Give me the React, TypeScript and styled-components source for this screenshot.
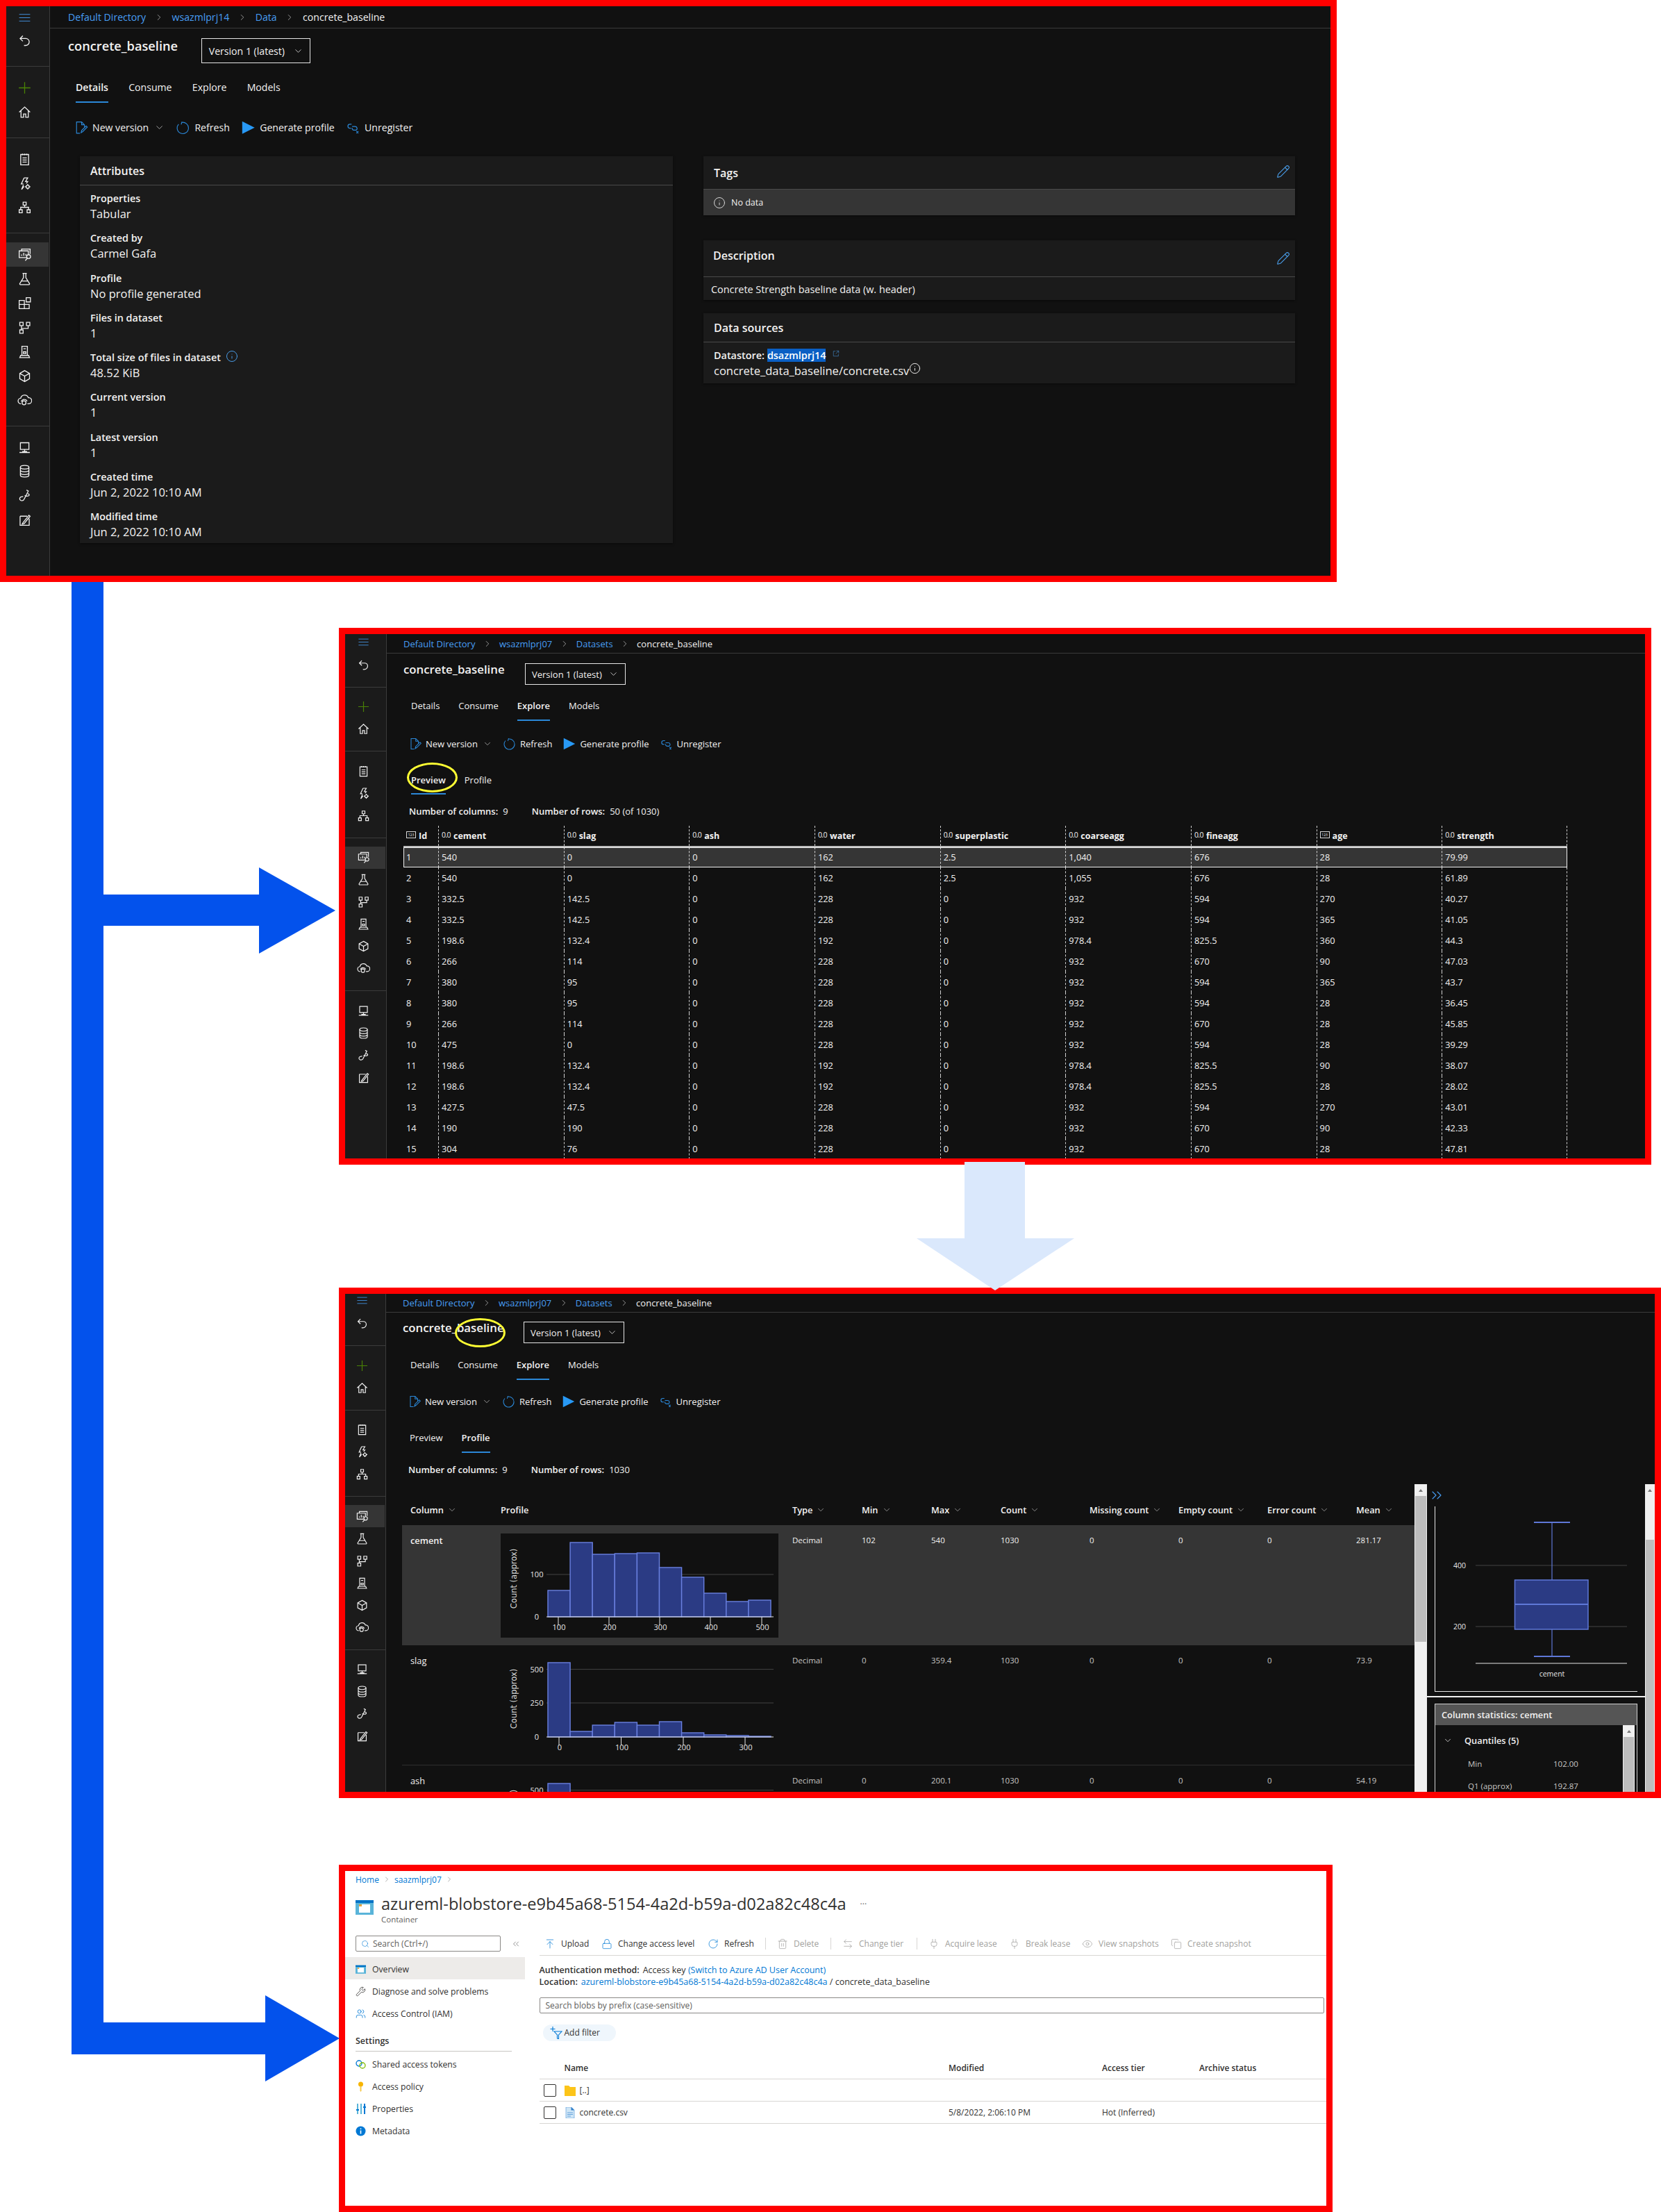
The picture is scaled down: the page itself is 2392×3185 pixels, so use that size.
import React from 'react'
import styled, { createGlobalStyle } from 'styled-components'
import {
  ArrowLeftRight,
  ArrowUpToLine,
  ChevronDown,
  ChevronRight,
  ChevronsLeft,
  ChevronsRight,
  Copy,
  Eye,
  Info,
  Lock,
  Pencil,
  Plug,
  RotateCw,
  Search,
  Trash2,
  Users,
  Wrench,
} from 'lucide-react'

const GlobalStyle = createGlobalStyle`
  html, body {
    margin: 0;
    background: #fff;
    font-family: "Open Sans", "Noto Sans", sans-serif;
  }
  * { box-sizing: border-box; }
`

type Metrics = {
  u: number
  rail: number
  railPad: number
  icon: number
  item: number
  ham: number
  backGap: number
  pt: number
  pb: number
  crumb: number
  crumbPad: number
  titleW: number
  titleLh: number
  titleH: number
  ddTop: number
  ddH: number
  tabsH: number
  tabsLeft: number
  toolsH: number
  toolsLeft: number
}

const large: Metrics = {
  u: 1.085, rail: 62, railPad: 16, icon: 21, item: 34.9, ham: 32, backGap: 0, pt: 13, pb: 19,
  crumb: 32, crumbPad: 26, titleW: 192, titleLh: 50, titleH: 64, ddTop: 14, ddH: 36,
  tabsH: 43, tabsLeft: 37, toolsH: 77, toolsLeft: 35,
}
const medium: Metrics = {
  u: 1, rail: 59, railPad: 17, icon: 19, item: 32, ham: 22, backGap: 6, pt: 12, pb: 15.5,
  crumb: 28, crumbPad: 24, titleW: 175, titleLh: 46, titleH: 55, ddTop: 14, ddH: 31,
  tabsH: 42, tabsLeft: 35, toolsH: 65, toolsLeft: 32,
}
const compact: Metrics = {
  ...medium, rail: 58, railPad: 15, ham: 19, backGap: 7.5,
  crumb: 27, titleW: 174, titleLh: 44, titleH: 54, ddTop: 13, tabsH: 43, toolsH: 62,
}

const Page = styled.div`
  position: relative;
  width: 2392px;
  height: 3185px;
  overflow: hidden;
`

const Frame = styled.section<{ $w: number; $h: number; $top: number; $left: number; $light?: boolean }>`
  width: ${(p) => p.$w}px;
  height: ${(p) => p.$h}px;
  margin: ${(p) => p.$top}px 0 0 ${(p) => p.$left}px;
  border: 9px solid #ff0000;
  overflow: hidden;
  background: ${(p) => (p.$light ? '#fff' : '#111')};
  color: ${(p) => (p.$light ? '#323130' : '#f3f2f1')};
`

const Shell = styled.div<{ $m: Metrics }>`
  --u: ${(p) => p.$m.u};
  display: flex;
  height: 100%;
`

const Rail = styled.nav<{ $m: Metrics }>`
  flex: 0 0 ${(p) => p.$m.rail + 1}px;
  background: #1b1b1b;
  border-right: 1px solid #3b3b3b;
  color: #f0f0f0;
`

const RailGroup = styled.div<{ $m: Metrics; $first?: boolean }>`
  padding: ${(p) => (p.$first ? 0 : p.$m.pt)}px 0 ${(p) => p.$m.pb}px;
  border-bottom: 1px solid #3b3b3b;
  &:last-child { border-bottom: 0; }
`

const RailItem = styled.div<{ $m: Metrics; $active?: boolean; $color?: string; $h?: number; $gap?: number }>`
  display: flex;
  align-items: center;
  height: ${(p) => p.$h ?? p.$m.item}px;
  margin-top: ${(p) => p.$gap ?? 0}px;
  margin-right: 1px;
  padding-left: ${(p) => p.$m.railPad}px;
  background: ${(p) => (p.$active ? '#353535' : 'transparent')};
  color: ${(p) => p.$color ?? 'inherit'};
  svg {
    width: ${(p) => p.$m.icon}px;
    height: ${(p) => p.$m.icon}px;
    fill: none;
    stroke: currentColor;
    stroke-width: 1.5;
  }
`

const Main = styled.main`
  flex: 1;
  min-width: 0;
`

const CrumbBar = styled.div<{ $m: Metrics }>`
  display: flex;
  align-items: center;
  height: ${(p) => p.$m.crumb}px;
  padding-left: ${(p) => p.$m.crumbPad}px;
  border-bottom: 1px solid #3b3b3b;
  font-size: calc(var(--u) * 13px);
`

const CrumbLink = styled.span`
  color: #479ef5;
`

const CrumbSep = styled.span`
  display: flex;
  justify-content: center;
  width: calc(var(--u) * 34.5px);
  color: #c8c8c8;
`

const TitleRow = styled.div<{ $m: Metrics }>`
  display: flex;
  align-items: flex-start;
  height: ${(p) => p.$m.titleH}px;
  padding-left: ${(p) => p.$m.crumbPad}px;
`

const PageTitle = styled.h1<{ $m: Metrics }>`
  position: relative;
  width: ${(p) => p.$m.titleW}px;
  margin: 0;
  font-size: calc(var(--u) * 16.8px);
  font-weight: 600;
  line-height: ${(p) => p.$m.titleLh}px;
  white-space: nowrap;
`

const VersionSelect = styled.div<{ $m: Metrics }>`
  display: flex;
  align-items: center;
  justify-content: space-between;
  width: calc(var(--u) * 145px);
  height: ${(p) => p.$m.ddH}px;
  margin-top: ${(p) => p.$m.ddTop}px;
  padding: 0 calc(var(--u) * 9px);
  border: 1px solid #e6e6e6;
  font-size: calc(var(--u) * 13px);
`

const TabStrip = styled.div<{ $h: number; $left: number }>`
  display: flex;
  gap: calc(var(--u) * 27px);
  height: ${(p) => p.$h}px;
  padding-left: ${(p) => p.$left}px;
`

const Tab = styled.span<{ $active?: boolean }>`
  position: relative;
  display: flex;
  align-items: center;
  border-bottom: 2px solid ${(p) => (p.$active ? '#2b88d8' : 'transparent')};
  font-size: calc(var(--u) * 13px);
  font-weight: ${(p) => (p.$active ? 600 : 400)};
`

const ToolBar = styled.div<{ $h: number; $left: number }>`
  display: flex;
  align-items: center;
  gap: calc(var(--u) * 16px);
  height: ${(p) => p.$h}px;
  padding-left: ${(p) => p.$left}px;
  padding-bottom: ${(p) => (p.$h > 70 ? 5 : 0)}px;
`

const Tool = styled.span`
  display: flex;
  align-items: center;
  font-size: calc(var(--u) * 13px);
  white-space: nowrap;
  svg {
    flex: 0 0 auto;
    margin-right: calc(var(--u) * 6px);
    width: calc(var(--u) * 18px);
    height: calc(var(--u) * 18px);
    color: #2b88d8;
  }
`

const CaretDown = styled(ChevronDown)`
  && {
    width: calc(var(--u) * 14px);
    height: calc(var(--u) * 14px);
    margin: 0 0 0 calc(var(--u) * 7px);
    color: #bdbdbd;
    stroke-width: 1.3;
  }
`

const Ring = styled.span<{ $w: number; $h: number; $x: number; $y: number }>`
  position: absolute;
  left: ${(p) => p.$x}px;
  top: ${(p) => p.$y}px;
  width: ${(p) => p.$w}px;
  height: ${(p) => p.$h}px;
  border: 3px solid #ffff33;
  border-radius: 50%;
`

const CountLine = styled.div<{ $h: number; $top?: number }>`
  display: flex;
  align-items: center;
  gap: 34px;
  height: ${(p) => p.$h}px;
  padding: ${(p) => p.$top ?? 0}px 0 0 32px;
  font-size: 13px;
  b { font-weight: 600; margin-right: 7px; }
`

/* details page */
const DetailGrid = styled.div`
  display: grid;
  grid-template-columns: 854px 852px;
  column-gap: 44px;
  padding-left: 43px;
`

const Card = styled.div<{ $mt?: number }>`
  margin-top: ${(p) => p.$mt ?? 0}px;
  background: #1b1b1b;
  box-shadow: 0 1px 3px rgba(0, 0, 0, 0.5);
`

const CardHead = styled.div<{ $h: number; $pad?: number; $top?: number }>`
  display: flex;
  align-items: ${(p) => (p.$top ? 'flex-start' : 'center')};
  justify-content: space-between;
  height: ${(p) => p.$h}px;
  padding: ${(p) => p.$top ?? 0}px 7px 0 ${(p) => p.$pad ?? 15}px;
  font-size: 16px;
  font-weight: 600;
  line-height: 22px;
  border-bottom: 1px solid #4a4a4a;
  svg {
    width: 20px;
    height: 20px;
    margin-top: ${(p) => (p.$top ? 5 : -4)}px;
    color: #4a9eea;
    stroke-width: 1.3;
  }
`

const Field = styled.div`
  height: 57.25px;
  padding: 7.5px 15px 0;
`

const FieldLabel = styled.div`
  display: flex;
  align-items: center;
  gap: 7px;
  height: 22px;
  font-size: 14.4px;
  font-weight: 600;
  svg { width: 18px; height: 18px; margin-top: -4px; color: #4a9eea; stroke-width: 1.3; }
`

const FieldValue = styled.div`
  display: flex;
  align-items: center;
  height: 22px;
  font-size: 16.5px;
  svg { width: 17px; height: 17px; margin-top: -5px; stroke-width: 1.4; }
`

const NoData = styled.div`
  display: flex;
  align-items: center;
  gap: 8px;
  height: 37px;
  padding-left: 14px;
  background: #353535;
  font-size: 12.5px;
  svg { width: 18px; height: 18px; color: #d8d8d8; stroke-width: 1.3; }
`

const CardText = styled.div`
  display: flex;
  align-items: center;
  height: 33px;
  padding: 2px 0 0 11px;
  font-size: 14.4px;
`

const CardBody = styled.div`
  padding: 7px 15px 8px;
`

const Highlight = styled.span`
  background: #0a5fc4;
  color: #fff;
  margin-left: 4px;
`

const External = styled.span`
  display: flex;
  margin-left: 3px;
  svg { width: 10px; height: 10px; color: #4a9eea; margin: -5px 0 0; }
`

/* preview table */
const GridTable = styled.div`
  width: 1676px;
  margin: -3px 0 0 24px;
`

const GridRow = styled.div<{ $head?: boolean; $selected?: boolean }>`
  display: grid;
  grid-template-columns: 50px repeat(9, 180.67px);
  height: ${(p) => (p.$head ? 28.5 : 29.95)}px;
  align-items: stretch;
  font-size: ${(p) => (p.$head ? 12.5 : 12.8)}px;
  font-weight: ${(p) => (p.$head ? 700 : 400)};
  background: ${(p) => (p.$selected ? '#353535' : 'transparent')};
  outline: ${(p) => (p.$selected ? '1px solid #f0f0f0' : 'none')};
  outline-offset: -1px;
  margin-bottom: ${(p) => (p.$head ? 2 : 0)}px;
  box-shadow: ${(p) => (p.$head ? '0 2px 0 #bdbdbd' : 'none')};
`

const GridCell = styled.div`
  display: flex;
  align-items: center;
  gap: 4px;
  padding-left: 4px;
  border-left: 1px dashed #cfcfcf;
  &:first-child { border-left: 0; }
  &:last-child { border-right: 1px dashed #cfcfcf; }
`

const TypeMark = styled.span`
  font-size: 10.5px;
  font-weight: 400;
  letter-spacing: -0.6px;
  margin-top: -3px;
`

const NumberMark = styled.span`
  display: inline-flex;
  align-items: center;
  justify-content: center;
  width: 14px;
  height: 10px;
  margin-top: -3px;
  border: 1px solid #d8d8d8;
  font-size: 5px;
  font-weight: 400;
`

/* profile view */
const ProfileBody = styled.div`
  display: flex;
  height: 444px;
`

const ProfileTable = styled.div`
  flex: 0 0 1481px;
  padding: 15.5px 0 0 23px;
  overflow: hidden;
`

const ProfileRow = styled.div<{ $head?: boolean; $active?: boolean; $h?: number; $line?: boolean }>`
  display: grid;
  grid-template-columns: 142px 420px 100px 100px 100px 128px 128px 128px 128px 84px;
  height: ${(p) => p.$h ?? 173.3}px;
  align-items: ${(p) => (p.$head ? 'center' : 'start')};
  background: ${(p) => (p.$active ? '#353535' : 'transparent')};
  border-bottom: ${(p) => (p.$line ? '1px solid #2e2e2e' : '0')};
  font-size: 11.5px;
  color: ${(p) => (p.$active ? '#f3f2f1' : '#c8c6c4')};
`

const ProfileHeadCell = styled.span<{ $pad?: number }>`
  display: flex;
  align-items: center;
  gap: 5px;
  padding-left: ${(p) => p.$pad ?? 0}px;
  font-size: 12.8px;
  font-weight: 600;
  color: #f3f2f1;
  svg { width: 14px; height: 14px; stroke-width: 1.2; color: #bdbdbd; }
`

const NameCell = styled.span<{ $active?: boolean }>`
  padding: 13px 0 0 12px;
  font-size: 12.8px;
  font-weight: ${(p) => (p.$active ? 600 : 400)};
  color: #f3f2f1;
`

const ValueCell = styled.span`
  padding-top: 14px;
`

const ChartCell = styled.span<{ $active?: boolean }>`
  display: block;
  width: 400px;
  height: 150px;
  margin-top: 12.5px;
  background: ${(p) => (p.$active ? '#111' : 'transparent')};
  svg { display: block; }
`

const ScrollTrack = styled.div<{ $w: number; $thumbTop: number; $thumbH: number }>`
  position: relative;
  flex: 0 0 ${(p) => p.$w}px;
  background: #f0f0f0;
  &::before {
    content: '';
    position: absolute;
    left: 1px;
    right: 1px;
    top: ${(p) => p.$thumbTop}px;
    height: ${(p) => p.$thumbH}px;
    background: #bdbdbd;
  }
  &::after {
    content: '';
    position: absolute;
    top: 7px;
    left: 50%;
    margin-left: -3px;
    border: 3px solid transparent;
    border-top: 0;
    border-bottom: 4px solid #777;
  }
`

const InsightPane = styled.div`
  flex: 0 0 314px;
`

const PaneHead = styled.div`
  display: flex;
  align-items: center;
  height: 32px;
  padding-left: 2px;
  svg { width: 24px; height: 24px; color: #479ef5; stroke-width: 1.1; }
`

const BoxFrame = styled.div`
  width: 292px;
  height: 267px;
  margin-left: 11px;
  border-left: 1px solid #e6e6e6;
  border-bottom: 1px solid #e6e6e6;
  svg { display: block; }
`

const PaneRule = styled.div`
  height: 2px;
  margin-top: 6px;
  background: #f0f0f0;
`

const StatsCard = styled.div`
  width: 292px;
  height: 200px;
  margin: 9px 0 0 11px;
  border: 1px solid #d0d0d0;
`

const StatsHead = styled.div`
  display: flex;
  align-items: center;
  height: 30px;
  padding-left: 9px;
  background: #555;
  font-size: 12.8px;
  font-weight: 600;
`

const StatsBody = styled.div`
  display: flex;
  justify-content: space-between;
  height: 170px;
  padding-right: 3px;
`

const StatsList = styled.div`
  flex: 1;
  padding-top: 8px;
  font-size: 11.5px;
  color: #c8c6c4;
`

const StatsGroup = styled.div`
  display: flex;
  align-items: center;
  height: 28px;
  margin-bottom: 3px;
  padding-left: 11px;
  font-size: 12.8px;
  font-weight: 600;
  color: #f3f2f1;
  svg { width: 14px; height: 14px; margin-right: 17px; stroke-width: 1.3; }
`

const StatsRow = styled.div`
  display: grid;
  grid-template-columns: 123px 1fr;
  align-items: center;
  height: 32px;
  padding-left: 47px;
`

/* azure portal */
const PortalCrumb = styled.div`
  display: flex;
  align-items: center;
  gap: 5px;
  height: 24px;
  padding-left: 15px;
  font-size: 12px;
  color: #0078d4;
  svg { width: 12px; height: 12px; color: #777; stroke-width: 1.2; }
`

const PortalHead = styled.header`
  display: grid;
  grid-template-columns: 26px 1fr;
  column-gap: 11px;
  height: 69.3px;
  padding-left: 15px;
  > svg { margin-top: 15px; }
`

const PortalTitleLine = styled.div`
  display: flex;
  align-items: center;
  gap: 20px;
  height: 36px;
  margin-top: 4.7px;
  font-size: 23.6px;
  color: #323130;
  span { font-size: 12px; margin-top: -6px; color: #605e5c; }
`

const PortalSub = styled.div`
  margin-top: -2.7px;
  font-size: 11.5px;
  line-height: 16px;
  color: #605e5c;
`

const PortalBody = styled.div`
  display: grid;
  grid-template-columns: 259px 1133px;
  column-gap: 20.5px;
`

const SideSearchRow = styled.div`
  display: flex;
  align-items: center;
  gap: 15px;
  padding-left: 15px;
  margin-bottom: 7.7px;
  svg { width: 14px; height: 14px; color: #666; stroke-width: 1.2; }
`

const SideSearch = styled.div`
  display: flex;
  align-items: center;
  gap: 5px;
  width: 209px;
  height: 23px;
  padding-left: 7px;
  border: 1px solid #8a8886;
  border-radius: 2px;
  font-size: 12px;
  color: #605e5c;
  svg { width: 12px; height: 12px; color: #0078d4; }
`

const SideItem = styled.div<{ $active?: boolean }>`
  display: flex;
  align-items: center;
  gap: 9px;
  height: 32px;
  padding: 3px 0 0 15px;
  background: ${(p) => (p.$active ? '#edebe9' : 'transparent')};
  font-size: 12.2px;
  svg { flex: 0 0 auto; width: 15px; height: 15px; stroke-width: 1.3; }
`

const SideHeading = styled.div`
  display: flex;
  align-items: flex-end;
  height: 40.3px;
  width: 225px;
  margin: 0 0 1px 15px;
  padding-bottom: 6px;
  border-bottom: 1px solid #c8c6c4;
  font-size: 12.5px;
  font-weight: 600;
`

const CommandBar = styled.div`
  display: flex;
  align-items: center;
  height: 29px;
  padding: 0 0 5px 7.5px;
  border-bottom: 1px solid #d8d6d4;
`

const Command = styled.span<{ $w: number; $off?: boolean }>`
  display: flex;
  align-items: center;
  gap: 8px;
  width: ${(p) => p.$w}px;
  font-size: 12px;
  white-space: nowrap;
  color: ${(p) => (p.$off ? '#a19f9d' : '#323130')};
  svg {
    flex: 0 0 auto;
    width: 16px;
    height: 16px;
    stroke-width: 1.1;
    color: ${(p) => (p.$off ? '#a19f9d' : '#0078d4')};
  }
`

const CommandRule = styled.span`
  width: 1px;
  height: 17px;
  margin-right: 16px;
  background: #d8d6d4;
`

const AuthBlock = styled.div`
  padding-top: 11.5px;
  font-size: 12.5px;
  line-height: 17px;
  b { font-weight: 600; margin-right: 5px; }
  a { color: #0078d4; }
`

const PrefixBox = styled.div`
  display: flex;
  align-items: center;
  width: 1130px;
  height: 23px;
  margin-top: 14.5px;
  padding-left: 8px;
  border: 1px solid #8a8886;
  border-radius: 2px;
  font-size: 12px;
  color: #605e5c;
`

const FilterPill = styled.div`
  display: flex;
  align-items: center;
  gap: 3px;
  width: 105px;
  height: 24px;
  margin: 15.7px 0 0 5px;
  padding-left: 10px;
  border-radius: 12px;
  background: #eff6fc;
  font-size: 12px;
  svg { width: 18px; height: 18px; }
`

const BlobRow = styled.div<{ $head?: boolean }>`
  display: grid;
  grid-template-columns: 36px 553.5px 221px 140px 183px;
  align-items: center;
  height: ${(p) => (p.$head ? 33 : 32)}px;
  margin-top: ${(p) => (p.$head ? 22.3 : 0)}px;
  border-bottom: 1px solid #d8d6d4;
  font-size: 12px;
  font-weight: ${(p) => (p.$head ? 600 : 400)};
`

const BlobName = styled.span`
  display: flex;
  align-items: center;
  gap: 6px;
  svg { width: 16px; height: 16px; }
`

const Tick = styled.span`
  display: block;
  width: 18px;
  height: 18px;
  margin-left: 6.5px;
  border: 1px solid #323130;
  border-radius: 2px;
`

const Overlay = styled.svg`
  position: absolute;
  left: 0;
  top: 0;
  pointer-events: none;
`

/* rail drawings */
const railIcons: Record<string, React.ReactNode> = {
  menu: <path d="M3 6.5h18M3 12h18M3 17.5h18" strokeWidth="1" />,
  back: <path d="M9 4 4.5 8.5 9 13M4.5 8.5H14a5.5 5.5 0 0 1 5.5 5.5v0a6 6 0 0 1-6 6H11" />,
  plus: <path d="M12 2.5v19M2.5 12h19" />,
  home: <path d="M3 12 12 3.5 21 12M6 9.5V20.5h4.2V15h3.6v5.5H18V9.5" />,
  notebook: <path d="M5.5 4h13v17h-13zM8.5 2.5V5M12 2.5V5M15.5 2.5V5M8.5 9.5h7M8.5 13h7M8.5 16.5h7" />,
  automl: (
    <>
      <path d="M11 2.5h6l-3.5 6H17l-2.2 3M10 14l-3 7.5 4-5M11 2.5 6.5 12.5H10" />
      <circle cx="17" cy="17" r="2.5" />
      <path d="M17 12.5v2M17 19.5v2M12.5 17h2M19.5 17h2" />
    </>
  ),
  designer: <path d="M9.5 3.5h5v5h-5zM3 16h5v5H3zM16 16h5v5h-5zM12 8.5v3.5M5.5 16v-4h13v4" />,
  data: (
    <>
      <path d="M7 6V3h14v8M3 6h15v11H3zM7 14v-2M10.5 14V9M14 14v-3M13 22l3.5-4" />
      <circle cx="18.5" cy="15.5" r="3.2" fill="#353535" />
    </>
  ),
  flask: <path d="M8.5 3h7M10 3v7L4.2 19.5a1.2 1.2 0 0 0 1 2h13.6a1.2 1.2 0 0 0 1-2L14 10V3M7 15.5h10" />,
  parts: <path d="M3 7.5h8.5V21H3zM3 14.2h16.5V21h-8M14.5 3h7v7h-7z" />,
  flow: <path d="M4 3.5h5.5V9H4zM15 3.5h5.5V9H15zM4 16h5.5v5.5H4zM6.8 9v7M17.8 9v4.5H6.8" />,
  env: <path d="M7.5 3h9v15h-9zM10 7h4M10 12h4v3h-4zM4 21.5h16L18.5 18h-13z" />,
  box: <path d="M12 3l8 4.5v9L12 21l-8-4.5v-9zM4 7.5l8 4.5 8-4.5M12 12v9" />,
  cloud: (
    <>
      <path d="M6 17.5a4.5 4.5 0 0 1-.5-9 6.5 6.5 0 0 1 12.5-1 5 5 0 0 1 1 10h-2.5M6.5 14a5 5 0 0 1 5-3.5 5 5 0 0 1 4.5 3" />
      <circle cx="11" cy="16" r="3.2" />
    </>
  ),
  compute: <path d="M5 4h14v11H5zM12 15v4M3.5 20h17M8 18.5h8" />,
  db: (
    <>
      <ellipse cx="12" cy="5.5" rx="7" ry="3" />
      <path d="M5 5.5v13c0 1.7 3 3 7 3s7-1.3 7-3v-13M5 10c0 1.7 3 3 7 3s7-1.3 7-3M5 14.5c0 1.7 3 3 7 3s7-1.3 7-3" />
    </>
  ),
  label: <path d="M15 3l3 1.5-6.5 13c-1 2.5-3.5 3.5-6 2.5-2.5-1.5-2-4.5 0-5.5l4-1M17 9c2.5 0 3.5 2.5 1.5 3.5-1.5.7-4 .5-6.5-.5" />,
  link: <path d="M4.5 6H16M4.5 6v15h15V10M9 17l10-12.5 2 1.5-10 12.5-3 .5z" />,
}

const RailIcon = ({ name }: { name: string }) => <svg viewBox="0 0 24 24">{railIcons[name]}</svg>

const StudioRail = ({ m, withParts }: { m: Metrics; withParts?: boolean }) => {
  const authoring = ['notebook', 'automl', 'designer']
  const assets = withParts
    ? ['flask', 'parts', 'flow', 'env', 'box', 'cloud']
    : ['flask', 'flow', 'env', 'box', 'cloud']
  const manage = ['compute', 'db', 'label', 'link']
  return (
    <Rail $m={m}>
      <RailGroup $m={m} $first>
        <RailItem $m={m} $h={m.ham} $color="#479ef5">
          <RailIcon name="menu" />
        </RailItem>
        <RailItem $m={m} $gap={m.backGap}>
          <RailIcon name="back" />
        </RailItem>
      </RailGroup>
      <RailGroup $m={m}>
        <RailItem $m={m} $color="#498205">
          <RailIcon name="plus" />
        </RailItem>
        <RailItem $m={m}>
          <RailIcon name="home" />
        </RailItem>
      </RailGroup>
      <RailGroup $m={m}>
        {authoring.map((n) => (
          <RailItem $m={m} key={n}>
            <RailIcon name={n} />
          </RailItem>
        ))}
      </RailGroup>
      <RailGroup $m={m}>
        <RailItem $m={m} $active>
          <RailIcon name="data" />
        </RailItem>
        {assets.map((n) => (
          <RailItem $m={m} key={n}>
            <RailIcon name={n} />
          </RailItem>
        ))}
      </RailGroup>
      <RailGroup $m={m}>
        {manage.map((n) => (
          <RailItem $m={m} key={n}>
            <RailIcon name={n} />
          </RailItem>
        ))}
      </RailGroup>
    </Rail>
  )
}

const DocEditIcon = () => (
  <svg viewBox="0 0 24 24" fill="none" stroke="currentColor" strokeWidth="1.4">
    <path d="M10 22H4V2h9l5 5v4M13 2v5h5M12 21l1-4 8-8 2 2-8 8z" />
  </svg>
)
const RefreshIcon = () => (
  <svg viewBox="0 0 24 24" fill="none" stroke="currentColor" strokeWidth="1.4">
    <path d="M9 3a10 10 0 1 1-5 3M10 1.5 8.5 6.5" />
  </svg>
)
const PlayIcon = () => (
  <svg viewBox="0 0 24 24">
    <path d="M1 1 23 12 1 23z" fill="#2899f5" />
  </svg>
)
const UnlinkIcon = () => (
  <svg viewBox="0 0 24 24" fill="none" stroke="currentColor" strokeWidth="1.5">
    <path d="M9 6H6a3.5 3.5 0 0 0 0 7h2M10 10h5a3.5 3.5 0 0 1 2 6.5h-4a3.5 3.5 0 0 1-3-4M17.5 18.5l3.5 3.5M21 18.5 17.5 22" />
  </svg>
)

type Crumb = { a: string; b: string; c: string }

const StudioHead = ({ m, crumbs, tab, ring }: { m: Metrics; crumbs: Crumb; tab: string; ring?: boolean }) => (
  <>
    <CrumbBar $m={m}>
      <CrumbLink>Default Directory</CrumbLink>
      <CrumbSep><ChevronRight size={14} strokeWidth={1.2} /></CrumbSep>
      <CrumbLink>{crumbs.a}</CrumbLink>
      <CrumbSep><ChevronRight size={14} strokeWidth={1.2} /></CrumbSep>
      <CrumbLink>{crumbs.b}</CrumbLink>
      <CrumbSep><ChevronRight size={14} strokeWidth={1.2} /></CrumbSep>
      <span>{crumbs.c}</span>
    </CrumbBar>
    <TitleRow $m={m}>
      <PageTitle $m={m}>
        concrete_baseline
        {ring && <Ring $w={73} $h={42} $x={75} $y={8} />}
      </PageTitle>
      <VersionSelect $m={m}>
        Version 1 (latest)
        <ChevronDown size={15} strokeWidth={1.2} />
      </VersionSelect>
    </TitleRow>
    <TabStrip $h={m.tabsH} $left={m.tabsLeft}>
      {['Details', 'Consume', 'Explore', 'Models'].map((t) => (
        <Tab key={t} $active={t === tab}>{t}</Tab>
      ))}
    </TabStrip>
    <ToolBar $h={m.toolsH} $left={m.toolsLeft}>
      <Tool><DocEditIcon />New version<CaretDown /></Tool>
      <Tool><RefreshIcon />Refresh</Tool>
      <Tool><PlayIcon />Generate profile</Tool>
      <Tool><UnlinkIcon />Unregister</Tool>
    </ToolBar>
  </>
)

const attributes: [string, string][] = [
  ['Properties', 'Tabular'],
  ['Created by', 'Carmel Gafa'],
  ['Profile', 'No profile generated'],
  ['Files in dataset', '1'],
  ['Total size of files in dataset', '48.52 KiB'],
  ['Current version', '1'],
  ['Latest version', '1'],
  ['Created time', 'Jun 2, 2022 10:10 AM'],
  ['Modified time', 'Jun 2, 2022 10:10 AM'],
]

const DetailsView = () => (
  <DetailGrid>
    <Card>
      <CardHead $h={42}>Attributes</CardHead>
      {attributes.map(([label, value]) => (
        <Field key={label}>
          <FieldLabel>
            {label}
            {label.startsWith('Total') && <Info />}
          </FieldLabel>
          <FieldValue>{value}</FieldValue>
        </Field>
      ))}
    </Card>
    <div>
      <Card>
        <CardHead $h={48}>Tags<Pencil /></CardHead>
        <NoData><Info />No data</NoData>
      </Card>
      <Card $mt={36}>
        <CardHead $h={53} $pad={14} $top={11}>Description<Pencil /></CardHead>
        <CardText>Concrete Strength baseline data (w. header)</CardText>
      </Card>
      <Card $mt={19}>
        <CardHead $h={42}>Data sources</CardHead>
        <CardBody>
          <FieldLabel>
            <span>Datastore:<Highlight>dsazmlprj14</Highlight></span>
            <External><svg viewBox="0 0 24 24" fill="none" stroke="currentColor" strokeWidth="2"><path d="M10 4H3v17h17v-7M13 3h8v8M21 3 11 13" /></svg></External>
          </FieldLabel>
          <FieldValue>concrete_data_baseline/concrete.csv<Info /></FieldValue>
        </CardBody>
      </Card>
    </div>
  </DetailGrid>
)

const columns: [string, boolean][] = [
  ['cement', false], ['slag', false], ['ash', false], ['water', false], ['superplastic', false],
  ['coarseagg', false], ['fineagg', false], ['age', true], ['strength', false],
]

const previewRows: string[][] = [
  ['1', '540', '0', '0', '162', '2.5', '1,040', '676', '28', '79.99'],
  ['2', '540', '0', '0', '162', '2.5', '1,055', '676', '28', '61.89'],
  ['3', '332.5', '142.5', '0', '228', '0', '932', '594', '270', '40.27'],
  ['4', '332.5', '142.5', '0', '228', '0', '932', '594', '365', '41.05'],
  ['5', '198.6', '132.4', '0', '192', '0', '978.4', '825.5', '360', '44.3'],
  ['6', '266', '114', '0', '228', '0', '932', '670', '90', '47.03'],
  ['7', '380', '95', '0', '228', '0', '932', '594', '365', '43.7'],
  ['8', '380', '95', '0', '228', '0', '932', '594', '28', '36.45'],
  ['9', '266', '114', '0', '228', '0', '932', '670', '28', '45.85'],
  ['10', '475', '0', '0', '228', '0', '932', '594', '28', '39.29'],
  ['11', '198.6', '132.4', '0', '192', '0', '978.4', '825.5', '90', '38.07'],
  ['12', '198.6', '132.4', '0', '192', '0', '978.4', '825.5', '28', '28.02'],
  ['13', '427.5', '47.5', '0', '228', '0', '932', '594', '270', '43.01'],
  ['14', '190', '190', '0', '228', '0', '932', '670', '90', '42.33'],
  ['15', '304', '76', '0', '228', '0', '932', '670', '28', '47.81'],
]

const PreviewView = () => (
  <>
    <TabStrip $h={41} $left={35}>
      <Tab $active>
        Preview
        <Ring $w={73} $h={43} $x={-6} $y={-5} />
      </Tab>
      <Tab>Profile</Tab>
    </TabStrip>
    <CountLine $h={48}>
      <span><b>Number of columns:</b>9</span>
      <span><b>Number of rows:</b>50 (of 1030)</span>
    </CountLine>
    <GridTable>
      <GridRow $head>
        <GridCell><NumberMark>123</NumberMark>Id</GridCell>
        {columns.map(([name, whole]) => (
          <GridCell key={name}>
            {whole ? <NumberMark>123</NumberMark> : <TypeMark>0.0</TypeMark>}
            {name}
          </GridCell>
        ))}
      </GridRow>
      {previewRows.map((row, i) => (
        <GridRow key={row[0]} $selected={i === 0}>
          {row.map((cell, j) => (
            <GridCell key={j}>{cell}</GridCell>
          ))}
        </GridRow>
      ))}
    </GridTable>
  </>
)

type ChartData = {
  tops: number[]
  grid: [string, number][]
  ticks: [string, number][]
}

const Histogram = ({ tops, grid, ticks }: ChartData) => (
  <svg width="400" height="150" viewBox="0 0 400 150">
    {grid.map(([label, y]) => (
      <g key={label}>
        {y < 120 && <line x1="66" x2="393" y1={y} y2={y} stroke="#454545" />}
        <text x="52" y={y + 4} textAnchor="middle" fontSize="11" fill="#e6e6e6" fontFamily="Open Sans">{label}</text>
      </g>
    ))}
    {tops.map((top, i) => (
      <rect key={i} x={68 + 32.1 * i} y={top} width="32.1" height={120 - top} fill="#2b3b84" stroke="#6a80e0" strokeWidth="1.4" />
    ))}
    <line x1="66" x2="393" y1="120" y2="120" stroke="#e6e6e6" />
    {ticks.map(([label, x]) => (
      <g key={label}>
        <line x1={x} x2={x} y1="120" y2="132" stroke="#e6e6e6" />
        <text x={x + 1} y="139" textAnchor="middle" fontSize="11" fill="#e6e6e6" fontFamily="Open Sans">{label}</text>
      </g>
    ))}
    <text transform="translate(23 65) rotate(-90)" textAnchor="middle" fontSize="11.5" fill="#d8d8d8" fontFamily="DejaVu Sans">Count (approx)</text>
  </svg>
)

const cementChart: ChartData = {
  tops: [82, 13, 30, 29, 28, 49, 63, 86, 98, 96],
  grid: [['100', 59], ['0', 120]],
  ticks: [['100', 83], ['200', 156], ['300', 229], ['400', 302], ['500', 376]],
}
const slagChart: ChartData = {
  tops: [13, 112, 103, 99, 103, 98, 114, 117, 118, 119],
  grid: [['500', 22.6], ['250', 71], ['0', 120]],
  ticks: [['0', 84], ['100', 173.5], ['200', 263], ['300', 352]],
}
const ashChart: ChartData = {
  tops: [13, 80, 100, 110, 100, 105, 112, 115, 118, 119],
  grid: [['500', 22.6]],
  ticks: [],
}

const headCols = ['Type', 'Min', 'Max', 'Count', 'Missing count', 'Empty count', 'Error count', 'Mean']

const profileRows = [
  { name: 'cement', chart: cementChart, vals: ['Decimal', '102', '540', '1030', '0', '0', '0', '281.17'], active: true },
  { name: 'slag', chart: slagChart, vals: ['Decimal', '0', '359.4', '1030', '0', '0', '0', '73.9'], line: true },
  { name: 'ash', chart: ashChart, vals: ['Decimal', '0', '200.1', '1030', '0', '0', '0', '54.19'] },
]

const BoxPlot = () => (
  <svg width="291" height="266" viewBox="0 0 291 266">
    <line x1="58" x2="276" y1="85" y2="85" stroke="#454545" />
    <line x1="58" x2="276" y1="173" y2="173" stroke="#454545" />
    <text x="35" y="88.5" textAnchor="middle" fontSize="10.5" fill="#e6e6e6" fontFamily="Open Sans">400</text>
    <text x="35" y="176.5" textAnchor="middle" fontSize="10.5" fill="#e6e6e6" fontFamily="Open Sans">200</text>
    <g stroke="#5f78d8" fill="none">
      <line x1="168" x2="168" y1="23" y2="106" strokeWidth="1.2" />
      <line x1="168" x2="168" y1="177" y2="216" strokeWidth="1.2" />
      <line x1="142" x2="194" y1="23" y2="23" strokeWidth="2" />
      <line x1="142" x2="194" y1="216" y2="216" strokeWidth="2" />
      <rect x="114.5" y="106" width="105.5" height="71" fill="#2b3b84" strokeWidth="1.5" />
      <line x1="114.5" x2="220" y1="141" y2="141" strokeWidth="2" />
    </g>
    <line x1="58" x2="276" y1="226" y2="226" stroke="#e6e6e6" />
    <text x="168" y="245" textAnchor="middle" fontSize="10.5" fill="#e6e6e6" fontFamily="Open Sans">cement</text>
  </svg>
)

const ProfileView = () => (
  <>
    <TabStrip $h={43} $left={34}>
      <Tab>Preview</Tab>
      <Tab $active>Profile</Tab>
    </TabStrip>
    <CountLine $h={45} $top={2}>
      <span><b>Number of columns:</b>9</span>
      <span><b>Number of rows:</b>1030</span>
    </CountLine>
    <ProfileBody>
      <ProfileTable>
        <ProfileRow $head $h={43}>
          <ProfileHeadCell $pad={12}>Column<ChevronDown /></ProfileHeadCell>
          <ProfileHeadCell>Profile</ProfileHeadCell>
          {headCols.map((c) => (
            <ProfileHeadCell key={c}>{c}<ChevronDown /></ProfileHeadCell>
          ))}
        </ProfileRow>
        {profileRows.map((r) => (
          <ProfileRow key={r.name} $active={r.active} $line={r.line}>
            <NameCell $active={r.active}>{r.name}</NameCell>
            <ChartCell $active={r.active}><Histogram {...r.chart} /></ChartCell>
            {r.vals.map((v, i) => (
              <ValueCell key={i}>{v}</ValueCell>
            ))}
          </ProfileRow>
        ))}
      </ProfileTable>
      <ScrollTrack $w={18} $thumbTop={17} $thumbH={210} />
      <InsightPane>
        <PaneHead><ChevronsRight /></PaneHead>
        <BoxFrame><BoxPlot /></BoxFrame>
        <PaneRule />
        <StatsCard>
          <StatsHead>Column statistics: cement</StatsHead>
          <StatsBody>
            <StatsList>
              <StatsGroup><ChevronDown />Quantiles (5)</StatsGroup>
              <StatsRow><span>Min</span><span>102.00</span></StatsRow>
              <StatsRow><span>Q1 (approx)</span><span>192.87</span></StatsRow>
            </StatsList>
            <ScrollTrack $w={17} $thumbTop={17} $thumbH={153} />
          </StatsBody>
        </StatsCard>
      </InsightPane>
      <ScrollTrack $w={14} $thumbTop={80} $thumbH={364} />
    </ProfileBody>
  </>
)

const ContainerIcon = ({ size }: { size: number }) => (
  <svg width={size} height={size} viewBox="0 0 26 26">
    <rect x="0" y="3" width="26" height="21" fill="#59b4d9" />
    <rect x="0" y="3" width="26" height="4" fill="#0072c6" />
    <rect x="5" y="9" width="16" height="12" fill="#fff" />
    <rect x="5" y="9" width="4" height="3" fill="#e8a33d" />
  </svg>
)

const KeyIcon = () => (
  <svg viewBox="0 0 15 15">
    <circle cx="7.5" cy="4" r="3.5" fill="#f7b500" />
    <path d="M6.5 7h2v6.5l-1 1.5-1-1.5z" fill="#f7c948" />
  </svg>
)
const PropsIcon = () => (
  <svg viewBox="0 0 15 15">
    <path d="M2 0h2v15H2zM7 0h2v15H7z" fill="#59b4d9" />
    <path d="M12 0h2v15h-2z" fill="#0078d4" />
    <path d="M1 8h4v2H1zM11 4h4v2h-4z" fill="#0078d4" />
  </svg>
)
const MetaIcon = () => (
  <svg viewBox="0 0 15 15">
    <circle cx="7.5" cy="7.5" r="7" fill="#0078d4" />
    <path d="M6.7 6.5h1.6v5H6.7zM6.7 3.5h1.6v1.6H6.7z" fill="#fff" />
  </svg>
)
const TokensIcon = () => (
  <svg viewBox="0 0 15 15" fill="none" strokeWidth="1.4">
    <circle cx="5" cy="6" r="4" stroke="#0078d4" />
    <circle cx="10" cy="9" r="4" stroke="#7fba00" />
  </svg>
)
const FilterAddIcon = () => (
  <svg viewBox="0 0 18 18" fill="none" stroke="#0078d4" strokeWidth="1.1">
    <path d="M4 0v7M0.5 3.5h7M6 7h11l-4.5 5v6l-2-1v-5z" />
  </svg>
)
const FolderIcon = () => (
  <svg viewBox="0 0 16 16">
    <path d="M0 1h6l2 2h8v13H0z" fill="#fcc419" />
  </svg>
)
const FileIcon = () => (
  <svg viewBox="0 0 16 16">
    <path d="M2 0h8l4 4v12H2z" fill="#cfe6f6" stroke="#4a90d6" strokeWidth="0.6" />
    <path d="M9.5 0 14 4.5H9.5z" fill="#2a7bc7" />
    <path d="M4 8h8M4 10.5h8M4 13h5" stroke="#4a90d6" strokeWidth="0.8" />
  </svg>
)

const PortalView = () => (
  <>
    <PortalCrumb>
      Home<ChevronRight />saazmlprj07<ChevronRight />
    </PortalCrumb>
    <PortalHead>
      <ContainerIcon size={26} />
      <div>
        <PortalTitleLine>
          azureml-blobstore-e9b45a68-5154-4a2d-b59a-d02a82c48c4a
          <span>...</span>
        </PortalTitleLine>
        <PortalSub>Container</PortalSub>
      </div>
    </PortalHead>
    <PortalBody>
      <div>
        <SideSearchRow>
          <SideSearch><Search />Search (Ctrl+/)</SideSearch>
          <ChevronsLeft />
        </SideSearchRow>
        <SideItem $active><ContainerIcon size={15} />Overview</SideItem>
        <SideItem><Wrench color="#323130" />Diagnose and solve problems</SideItem>
        <SideItem><Users color="#0078d4" />Access Control (IAM)</SideItem>
        <SideHeading>Settings</SideHeading>
        <SideItem><TokensIcon />Shared access tokens</SideItem>
        <SideItem><KeyIcon />Access policy</SideItem>
        <SideItem><PropsIcon />Properties</SideItem>
        <SideItem><MetaIcon />Metadata</SideItem>
      </div>
      <div>
        <CommandBar>
          <Command $w={82}><ArrowUpToLine />Upload</Command>
          <Command $w={153}><Lock />Change access level</Command>
          <Command $w={83}><RotateCw />Refresh</Command>
          <CommandRule />
          <Command $w={77} $off><Trash2 />Delete</Command>
          <CommandRule />
          <Command $w={107} $off><ArrowLeftRight />Change tier</Command>
          <CommandRule />
          <Command $w={116} $off><Plug />Acquire lease</Command>
          <Command $w={105} $off><Plug />Break lease</Command>
          <Command $w={128} $off><Eye />View snapshots</Command>
          <Command $w={120} $off><Copy />Create snapshot</Command>
        </CommandBar>
        <AuthBlock>
          <div><b>Authentication method:</b>Access key <a>(Switch to Azure AD User Account)</a></div>
          <div><b>Location:</b><a>azureml-blobstore-e9b45a68-5154-4a2d-b59a-d02a82c48c4a</a> / concrete_data_baseline</div>
        </AuthBlock>
        <PrefixBox>Search blobs by prefix (case-sensitive)</PrefixBox>
        <FilterPill><FilterAddIcon />Add filter</FilterPill>
        <BlobRow $head>
          <span />
          <span>Name</span>
          <span>Modified</span>
          <span>Access tier</span>
          <span>Archive status</span>
        </BlobRow>
        <BlobRow>
          <Tick />
          <BlobName><FolderIcon />[..]</BlobName>
          <span />
          <span />
          <span />
        </BlobRow>
        <BlobRow>
          <Tick />
          <BlobName><FileIcon />concrete.csv</BlobName>
          <span>5/8/2022, 2:06:10 PM</span>
          <span>Hot (Inferred)</span>
          <span />
        </BlobRow>
      </div>
    </PortalBody>
  </>
)

const App = () => (
  <Page>
    <GlobalStyle />
    <Frame $w={1925} $h={838} $top={0} $left={0}>
      <Shell $m={large}>
        <StudioRail m={large} withParts />
        <Main>
          <StudioHead m={large} crumbs={{ a: 'wsazmlprj14', b: 'Data', c: 'concrete_baseline' }} tab="Details" />
          <DetailsView />
        </Main>
      </Shell>
    </Frame>
    <Frame $w={1890} $h={773} $top={66} $left={488}>
      <Shell $m={medium}>
        <StudioRail m={medium} />
        <Main>
          <StudioHead m={medium} crumbs={{ a: 'wsazmlprj07', b: 'Datasets', c: 'concrete_baseline' }} tab="Explore" />
          <PreviewView />
        </Main>
      </Shell>
    </Frame>
    <Frame $w={1904} $h={735} $top={177} $left={488}>
      <Shell $m={compact}>
        <StudioRail m={compact} />
        <Main>
          <StudioHead m={compact} crumbs={{ a: 'wsazmlprj07', b: 'Datasets', c: 'concrete_baseline' }} tab="Explore" ring />
          <ProfileView />
        </Main>
      </Shell>
    </Frame>
    <Frame $w={1431} $h={500} $top={96} $left={488} $light>
      <PortalView />
    </Frame>
    <Overlay width="2392" height="3185" viewBox="0 0 2392 3185">
      <path d="M103 838h46v450h224v-39l110 62-110 62v-40H149v1579h233v-39l107 62-107 62v-39H103z" fill="#0352ec" />
      <path d="M1389 1673h87v110h71l-114 75-113-75h69z" fill="#dae8fc" />
    </Overlay>
  </Page>
)

export default App
